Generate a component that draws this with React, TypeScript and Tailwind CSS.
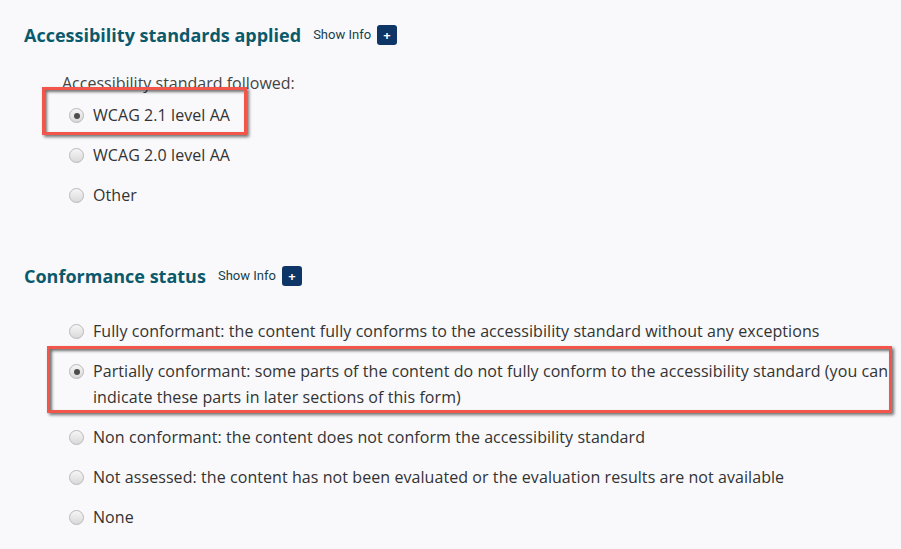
import React from 'react';

type Option = { label: string; checked?: boolean; highlight?: { left: number; top: number; width: number; height: number } };

const standards: Option[] = [
  { label: 'WCAG 2.1 level AA', checked: true, highlight: { left: -27, top: -8, width: 205, height: 48 } },
  { label: 'WCAG 2.0 level AA' },
  { label: 'Other' },
];

const statuses: Option[] = [
  { label: 'Fully conformant: the content fully conforms to the accessibility standard without any exceptions' },
  {
    label:
      'Partially conformant: some parts of the content do not fully conform to the accessibility standard (you can indicate these parts in later sections of this form)',
    checked: true,
    highlight: { left: -22, top: -5, width: 845, height: 67 },
  },
  { label: 'Non conformant: the content does not conform the accessibility standard' },
  { label: 'Not assessed: the content has not been evaluated or the evaluation results are not available' },
  { label: 'None' },
];

function Radio({ checked }: { checked?: boolean }) {
  return (
    <span className="mt-[6px] flex h-[15px] w-[15px] shrink-0 items-center justify-center rounded-full border border-[#b9b9b9] bg-gradient-to-b from-[#f6f6f6] to-[#d9d9d9]">
      {checked && <span className="h-[6px] w-[6px] rounded-full bg-[#4d4d4d]" />}
    </span>
  );
}

function OptionRow({ option }: { option: Option }) {
  return (
    <div className="relative flex gap-[9px] py-[7px] leading-[26px] tracking-[0.07px]">
      <Radio checked={option.checked} />
      <span>{option.label}</span>
      {option.highlight && (
        <div
          className="pointer-events-none absolute border-[3px] border-[#f2564b] shadow-[2px_2px_3px_rgba(0,0,0,0.55),inset_2px_2px_3px_rgba(0,0,0,0.55)]"
          style={{
            left: option.highlight.left,
            top: option.highlight.top,
            width: option.highlight.width,
            height: option.highlight.height,
          }}
        />
      )}
    </div>
  );
}

function SectionHeading({ title }: { title: string }) {
  return (
    <div className="flex h-[28px] items-center gap-3">
      <h2 className="text-[18px] font-bold leading-[28px] text-[#0b5a6b]">{title}</h2>
      <div className="flex items-center gap-[6px] leading-[20px]">
        <span className="font-['Roboto',sans-serif] text-[13px] text-[#163f4a]">Show Info</span>
        <button className="flex h-[20px] w-[20px] items-center justify-center rounded-[3px] bg-[#0d3566] text-[13px] font-bold leading-none text-white">
          +
        </button>
      </div>
    </div>
  );
}

export default function App() {
  return (
    <div className="min-h-[549px] w-[901px] bg-[#f9f9fb] pl-[24px] pr-[8px] pt-[21px] font-['Open_Sans',sans-serif] text-[16px] text-[#333]">
      <section>
        <SectionHeading title="Accessibility standards applied" />
        <div className="mt-[22px] pl-[38px] leading-[24px] text-[#444]">Accessibility standard followed:</div>
        <div className="pl-[45px]">
          {standards.map((o) => (
            <OptionRow key={o.label} option={o} />
          ))}
        </div>
      </section>

      <section className="mt-[47px]">
        <SectionHeading title="Conformance status" />
        <div className="mt-[21px] pl-[45px]">
          {statuses.map((o) => (
            <OptionRow key={o.label} option={o} />
          ))}
        </div>
      </section>
    </div>
  );
}
